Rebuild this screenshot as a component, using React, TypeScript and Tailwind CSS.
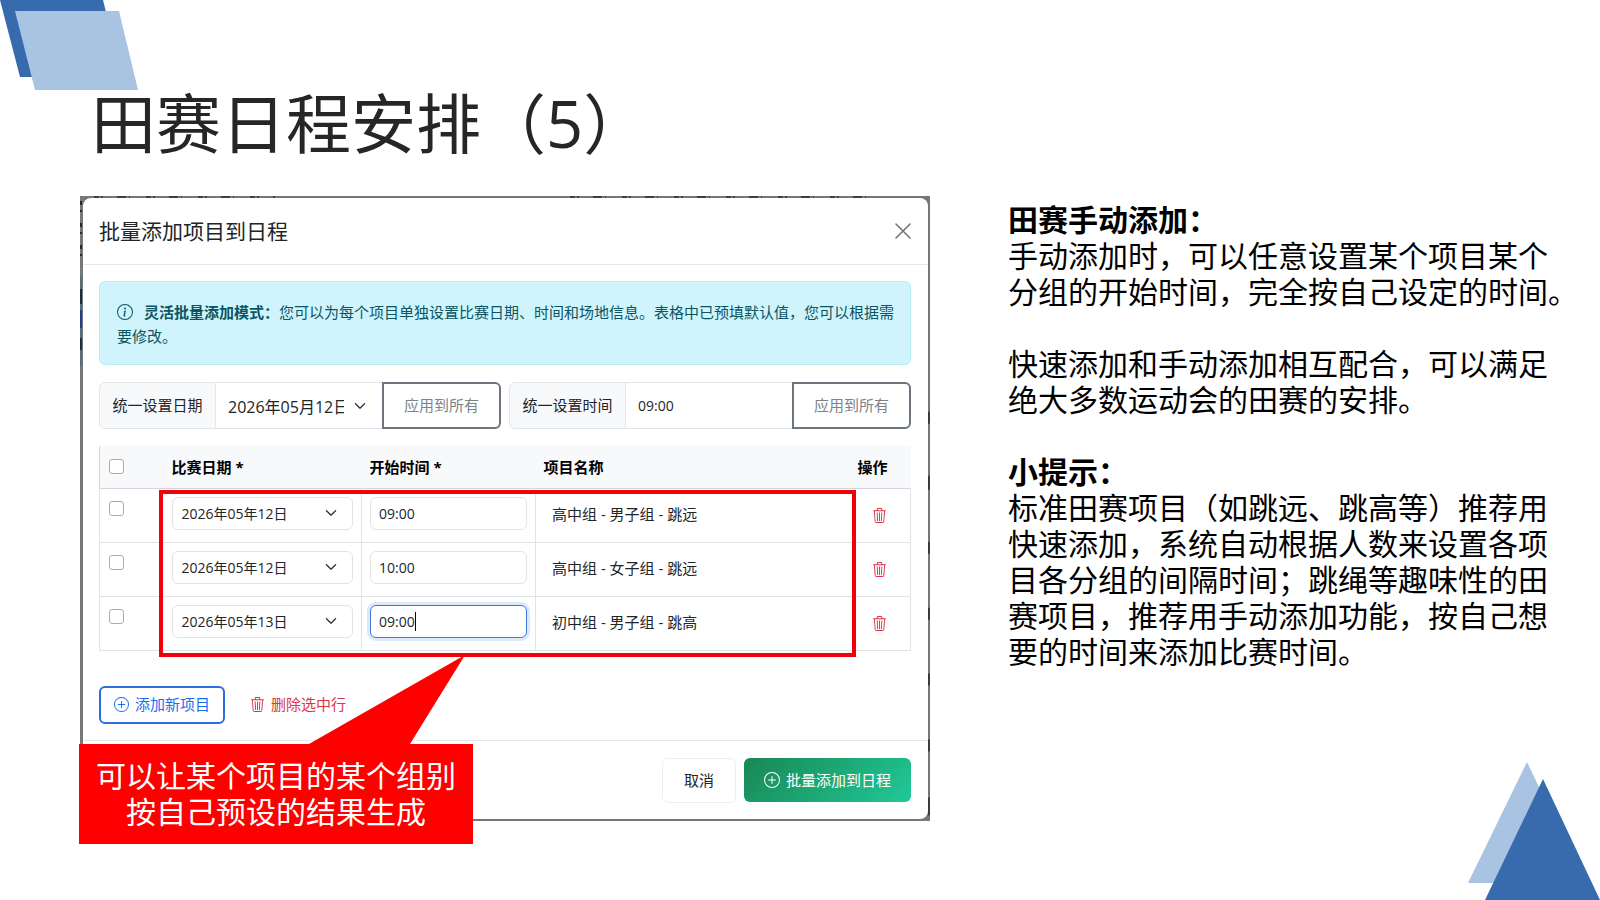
import { useState } from 'react'
import { BsChevronDown, BsInfoCircle, BsPlusCircle, BsTrash3 } from 'react-icons/bs'
import clsx from 'clsx'

interface EventRow {
  id: number
  date: string
  time: string
  name: string
  active?: boolean
}

const ROWS: EventRow[] = [
  { id: 1, date: '2026年05年12日', time: '09:00', name: '高中组 - 男子组 - 跳远' },
  { id: 2, date: '2026年05年12日', time: '10:00', name: '高中组 - 女子组 - 跳远' },
  { id: 3, date: '2026年05年13日', time: '09:00', name: '初中组 - 男子组 - 跳高', active: true },
]

const NOTES = [
  {
    title: '田赛手动添加：',
    lines: ['手动添加时，可以任意设置某个项目某个', '分组的开始时间，完全按自己设定的时间。'],
  },
  {
    lines: ['快速添加和手动添加相互配合，可以满足', '绝大多数运动会的田赛的安排。'],
  },
  {
    title: '小提示：',
    lines: [
      '标准田赛项目（如跳远、跳高等）推荐用',
      '快速添加，系统自动根据人数来设置各项',
      '目各分组的间隔时间；跳绳等趣味性的田',
      '赛项目，推荐用手动添加功能，按自己想',
      '要的时间来添加比赛时间。',
    ],
  },
]

function Checkbox({ label }: { label: string }) {
  return (
    <input
      type="checkbox"
      aria-label={label}
      className="block size-[15px] appearance-none rounded-[3px] border border-[#a9adb2] bg-white checked:bg-blue-600"
    />
  )
}

function ApplyButton() {
  return (
    <button className="w-[119px] shrink-0 rounded-r-md border-2 border-[#6c757d] text-[15px] text-[#7b838a]">
      应用到所有
    </button>
  )
}

function QuickSet() {
  return (
    <div className="mt-[17px] grid grid-cols-2 gap-2">
      <div className="flex h-[47px]">
        <label
          htmlFor="all-date"
          className="flex w-[117px] shrink-0 items-center justify-center rounded-l-md border border-[#e3e6e9] bg-[#f8f9fb] text-[15px]"
        >
          统一设置日期
        </label>
        <div className="relative min-w-0 flex-1">
          <select
            id="all-date"
            className="h-full w-full appearance-none border-y border-[#e3e6e9] bg-white pt-[2px] pr-[38px] pl-3 text-base"
          >
            <option>2026年05月12日</option>
          </select>
          <BsChevronDown className="pointer-events-none absolute top-1/2 right-4 size-3 -translate-y-1/2 stroke-1" />
        </div>
        <ApplyButton />
      </div>
      <div className="flex h-[47px]">
        <label
          htmlFor="all-time"
          className="flex w-[117px] shrink-0 items-center justify-center rounded-l-md border border-[#e3e6e9] bg-[#f8f9fb] text-[15px]"
        >
          统一设置时间
        </label>
        <input
          id="all-time"
          defaultValue="09:00"
          className="min-w-0 flex-1 border-y border-[#e3e6e9] bg-white px-3 text-sm"
        />
        <ApplyButton />
      </div>
    </div>
  )
}

function TableRow({ row }: { row: EventRow }) {
  const [time, setTime] = useState(row.time)

  return (
    <tr className="h-[54px] border border-[#e1e4e7] align-top">
      <td className="px-[9px] pt-3">
        <Checkbox label={`选择 ${row.name}`} />
      </td>
      <td className="border-r border-[#e1e4e7] px-2 pt-2">
        <div className="relative">
          <select
            aria-label="比赛日期"
            defaultValue={row.date}
            className="block h-[33px] w-full appearance-none rounded-md border border-[#e1e4e7] bg-white px-[9px] pt-[2px] text-sm"
          >
            <option>{row.date}</option>
          </select>
          <BsChevronDown className="pointer-events-none absolute top-1/2 right-4 size-3 -translate-y-1/2 stroke-1" />
        </div>
      </td>
      <td className="border-r border-[#e1e4e7] px-2 pt-2">
        <div className="relative">
          <input
            aria-label="开始时间"
            value={time}
            onChange={(e) => setTime(e.target.value)}
            className={clsx(
              'block h-[33px] w-full rounded-md border bg-white px-2 text-sm outline-none',
              row.active ? 'border-[#3d78dc] ring-3 ring-[#dce9fd]' : 'border-[#e1e4e7]'
            )}
          />
          {row.active && <span className="absolute top-[7px] left-[45px] h-[19px] w-px bg-black" />}
        </div>
      </td>
      <td className="px-4 pt-[13px] text-[15px] leading-6">{row.name}</td>
      <td className="pt-[19px]">
        <button aria-label="删除" className="mx-auto block text-[#dc3545]">
          <BsTrash3 className="size-[15px]" />
        </button>
      </td>
    </tr>
  )
}

function EventTable() {
  return (
    <div className="relative mt-[17px]">
      <table className="w-full table-fixed border-collapse">
        <colgroup>
          <col className="w-[64px]" />
          <col className="w-[198px]" />
          <col className="w-[174px]" />
          <col />
          <col className="w-[61px]" />
        </colgroup>
        <thead>
          <tr className="h-[42px] border-b border-l border-[#d3d6da] bg-[#f8f9fb] text-left text-[15px] text-black">
            <th className="px-[9px]">
              <Checkbox label="全选" />
            </th>
            <th className="px-2">比赛日期 *</th>
            <th className="px-2">开始时间 *</th>
            <th className="px-2">项目名称</th>
            <th className="px-2">操作</th>
          </tr>
        </thead>
        <tbody>
          {ROWS.map((row) => (
            <TableRow key={row.id} row={row} />
          ))}
        </tbody>
      </table>
      {/* highlight round the editable cells */}
      <div className="pointer-events-none absolute top-[44px] right-[55px] -bottom-[6px] left-[60px] border-4 border-[#f00308]" />
    </div>
  )
}

// dimmed page behind the dialog, seen only along its edge
function Backdrop() {
  return (
    <svg className="absolute inset-0 h-full w-full" viewBox="0 0 850 625" preserveAspectRatio="none" fill="none">
      <path d="M14 1H195M490 1H790" stroke="#3c3e41" strokeWidth="2" strokeDasharray="5 2 2 14 9 3 1 16" />
      <path d="M1 5V62" stroke="#1f2937" strokeWidth="2" strokeDasharray="4 5 2 11" />
      <path d="M1 80V170" stroke="#52707a" strokeWidth="2" />
      <path d="M1 93V108M1 142V154" stroke="#12313c" strokeWidth="2" />
      <path d="M1 114V132" stroke="#1d3f9c" strokeWidth="2" />
      <path d="M849 216V228M849 280V294M849 346V358M849 412V424M849 478V490M849 544V556M849 602V620" stroke="#3b3b3b" strokeWidth="2" />
    </svg>
  )
}

function Callout() {
  return (
    <div className="absolute -bottom-[23px] -left-px bg-[#ff0000] px-[17px] py-[14px] text-center text-[30px] leading-9 text-white">
      <svg className="absolute bottom-full left-[230px] h-[89px] w-[156px]" viewBox="0 0 156 89">
        <path d="M0 89L156 0L101 89Z" fill="#ff0000" />
      </svg>
      <p>可以让某个项目的某个组别</p>
      <p>按自己预设的结果生成</p>
    </div>
  )
}

function Dialog() {
  return (
    <section className="relative min-w-0 flex-1 bg-[#777777] py-[2px] pr-[2px] pl-[3px]">
      <Backdrop />
      <div className="relative rounded-lg bg-white text-[#212529]">
        <div className="flex h-[67px] items-center justify-between border-b border-[#e5e7ea] px-4">
          <h2 className="text-[21px] leading-8">批量添加项目到日程</h2>
          <button aria-label="关闭" className="p-px text-[#757575]">
            <svg className="size-4" viewBox="0 0 16 16" fill="none" stroke="currentColor" strokeWidth="1.6" strokeLinecap="round">
              <path d="M1 1L15 15M15 1L1 15" />
            </svg>
          </button>
        </div>

        <div className="pt-4 pr-[17px] pb-4 pl-4">
          <div className="rounded-md border border-[#b8edf6] bg-[#cff4fc] pt-[18px] pr-[11px] pb-4 pl-[17px] text-[15px] leading-6 text-[#0b5563]">
            <BsInfoCircle className="mr-[11px] -mt-1 inline size-4" />
            <strong>灵活批量添加模式：</strong>
            <span>
              您可以为每个项目单独设置比赛日期、时间和场地信息。表格中已预填默认值，您可以根据需要修改。
            </span>
          </div>

          <QuickSet />
          <EventTable />

          <div className="mt-[35px] flex items-center">
            <button className="flex h-[38px] items-center gap-[6px] rounded-md border-2 border-[#2a6fdc] px-[13px] text-[15px] text-[#1c6cf0]">
              <BsPlusCircle className="size-[15px]" />
              添加新项目
            </button>
            <button className="ml-[25px] flex items-center gap-[6px] text-[15px] text-[#dc3545]">
              <BsTrash3 className="size-[15px]" />
              删除选中行
            </button>
          </div>
        </div>

        <div className="flex items-center justify-end gap-2 border-t border-[#e5e7ea] pt-[17px] pr-[17px] pb-4">
          <button className="h-[45px] w-[74px] rounded-md border border-[#eceef0] text-[15px]">取消</button>
          <button className="flex h-11 w-[167px] items-center justify-center gap-[6px] rounded-md bg-[linear-gradient(135deg,#198754,#20c997)] text-[15px] text-white">
            <BsPlusCircle className="size-4" />
            批量添加到日程
          </button>
        </div>
      </div>
      <Callout />
    </section>
  )
}

export default function App() {
  return (
    <div className="relative min-h-screen overflow-hidden bg-white font-['Open_Sans','Noto_Sans_CJK_SC',sans-serif]">
      <svg className="absolute top-0 left-0 h-[90px] w-[138px]" viewBox="0 0 138 90">
        <path d="M0 0H103L122 77H20Z" fill="#376bad" />
        <path d="M15 11H119L138 90H35Z" fill="#a9c3e2" />
      </svg>
      <svg className="absolute right-0 bottom-0 h-[138px] w-[132px]" viewBox="0 0 132 138">
        <path d="M59 0L117 121H0Z" fill="#a9c3e2" />
        <path d="M75 17L132 138H17Z" fill="#376bad" />
      </svg>

      <h1 className="relative pt-[83px] pl-[91px] text-[65px] leading-[80px] text-[#262626]">田赛日程安排（5）</h1>

      <main className="relative mt-[33px] flex items-start gap-[78px] pr-5 pl-20">
        <Dialog />
        <aside className="w-[572px] shrink-0 space-y-9 pt-[6px] text-[30px] leading-9 text-black">
          {NOTES.map((note) => (
            <div key={note.lines[0]}>
              {note.title && <h3 className="font-bold">{note.title}</h3>}
              <p>
                {note.lines.map((line) => (
                  <span key={line} className="block whitespace-nowrap">
                    {line}
                  </span>
                ))}
              </p>
            </div>
          ))}
        </aside>
      </main>
    </div>
  )
}
